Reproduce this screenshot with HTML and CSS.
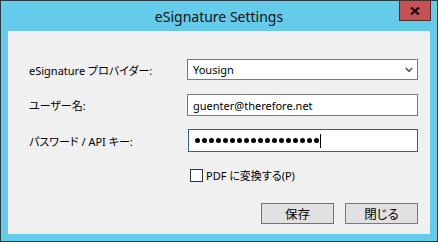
FILE: index.html
```html
<!DOCTYPE html>
<html lang="ja">
<head>
<meta charset="utf-8">
<title>eSignature Settings</title>
<link rel="stylesheet" href="styles.css">
</head>
<body>
<div class="window">
  <div class="titlebar">
    <span class="title">eSignature Settings</span>
    <div class="close-btn">
      <svg width="10" height="8" viewBox="0 0 10 8"><path d="M1 0.5 L9 7.5 M9 0.5 L1 7.5" stroke="#111" stroke-width="2.2" fill="none"/></svg>
    </div>
  </div>
  <div class="client">
    <div class="row row-provider">
      <label class="label">eSignature プロバイダー:</label>
      <div class="field combo">
        <span class="value">Yousign</span>
        <svg class="chev" width="8" height="6" viewBox="0 0 8 6"><path d="M0.8 1 L4 4.4 L7.2 1" stroke="#555" stroke-width="1.6" fill="none"/></svg>
      </div>
    </div>
    <div class="row row-user">
      <label class="label">ユーザー名:</label>
      <div class="field text">
        <span class="value">guenter@therefore.net</span>
      </div>
    </div>
    <div class="row row-pass">
      <label class="label">パスワード / API キー:</label>
      <div class="field text focused">
        <span class="dots">
          <i></i><i></i><i></i><i></i><i></i><i></i><i></i><i></i><i></i><i></i><i></i><i></i><i></i><i></i><i></i><i></i><i></i><i></i>
        </span>
        <span class="caret"></span>
      </div>
    </div>
    <div class="row row-check">
      <span class="checkbox"></span>
      <span class="check-label">PDF に変換する(P)</span>
    </div>
    <div class="buttons">
      <div class="btn default">保存</div>
      <div class="btn">閉じる</div>
    </div>
  </div>
</div>
</body>
</html>
```
FILE: styles.css
```css
html, body {
  margin: 0;
  padding: 0;
  background: #f0f0f0;
}
body {
  font-family: "Noto Sans", "Noto Sans CJK JP", sans-serif;
  font-size: 11px;
  font-feature-settings: "palt" 1;
  color: #000;
}
.window {
  position: relative;
  width: 438px;
  height: 242px;
  box-sizing: border-box;
  border: 1px solid #2c3a44;
  background: #64cbea;
  padding: 0 7px 7px 7px;
  display: flex;
  flex-direction: column;
}
.titlebar {
  height: 30px;
  flex: none;
  display: flex;
  align-items: center;
  justify-content: center;
}
.title {
  font-family: "Noto Sans", sans-serif;
  font-size: 14px;
  color: #111;
  margin-top: 1px;
}
.close-btn {
  position: absolute;
  top: -1px;
  right: 6px;
  width: 32px;
  height: 21px;
  box-sizing: border-box;
  background: #c75050;
  border: 1px solid #4a3333;
  display: flex;
  align-items: center;
  justify-content: center;
}
.client {
  flex: 1;
  background: #f0f0f0;
  padding-left: 21px;
  padding-right: 12px;
  display: flex;
  flex-direction: column;
}
.row {
  display: flex;
  align-items: center;
}
.label {
  width: 158px;
  flex: none;
}
.row-provider { margin-top: 28px; }
.row-user { margin-top: 14px; }
.row-pass { margin-top: 13px; }
.field {
  box-sizing: border-box;
  width: 232px;
  background: #fff;
  border: 1px solid #7a7a7a;
  display: flex;
  align-items: center;
  padding-left: 5px;
  font-size: 11px;
}
.combo {
  height: 21px;
  justify-content: space-between;
  padding-right: 4px;
}
.text { height: 22px; }
.focused {
  height: 23px;
  width: 231px;
  margin-left: 1px;
  border-color: #2d6292;
  padding-left: 6px;
}
.value { line-height: 1; }
.dots {
  display: flex;
  gap: 2px;
}
.dots i {
  display: block;
  width: 5px;
  height: 5px;
  border-radius: 50%;
  background: #000;
}
.caret {
  display: block;
  width: 1px;
  height: 14px;
  background: #000;
  margin-left: 1px;
}
.row-check {
  margin-top: 15px;
  padding-left: 161px;
}
.checkbox {
  display: block;
  width: 13px;
  height: 13px;
  box-sizing: border-box;
  border: 1px solid #333;
  background: #fff;
}
.check-label {
  margin-left: 3px;
}
.buttons {
  margin-top: 20px;
  display: flex;
  justify-content: flex-end;
  gap: 11px;
}
.btn {
  width: 73px;
  height: 21px;
  box-sizing: border-box;
  border: 1px solid #7a7a7a;
  background: #e1e1e1;
  display: flex;
  align-items: center;
  justify-content: center;
  font-size: 12.5px;
}
.btn.default {
  border-color: #3c7fb1;
}
```
